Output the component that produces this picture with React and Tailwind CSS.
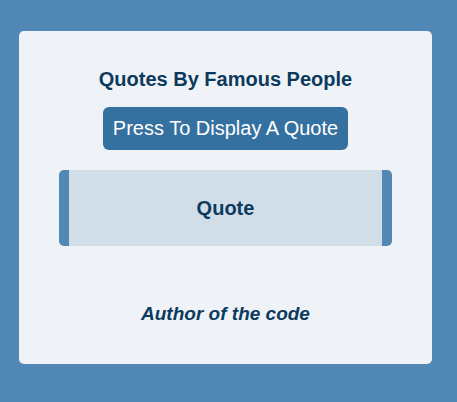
export default function App() {
  return (
    <div className="w-[457px] h-[402px] bg-[#5188b5] pt-[31px] pl-[19px]" style={{ fontFamily: '"Liberation Sans", Arial, sans-serif' }}>
      <div className="w-[413px] h-[333px] bg-[#eff3f7] rounded-[5px] flex flex-col items-center text-[#0c3a5e]">
        <h1 className="mt-[37px] text-[20px] font-bold leading-[normal]">Quotes By Famous People</h1>
        <button className="mt-[16px] bg-[#3571a0] text-white text-[20px] leading-[normal] px-[10px] py-[10px] rounded-[6px]">Press To Display A Quote</button>
        <div className="mt-[20px] w-[333px] h-[76px] bg-[#d1dde7] border-x-[10px] border-[#5188b5] rounded-[5px] flex items-center justify-center">
          <p className="text-[20px] font-bold leading-[normal]">Quote</p>
        </div>
        <p className="mt-[57px] text-[19px] font-bold italic leading-[normal]">Author of the code</p>
      </div>
    </div>
  );
}
